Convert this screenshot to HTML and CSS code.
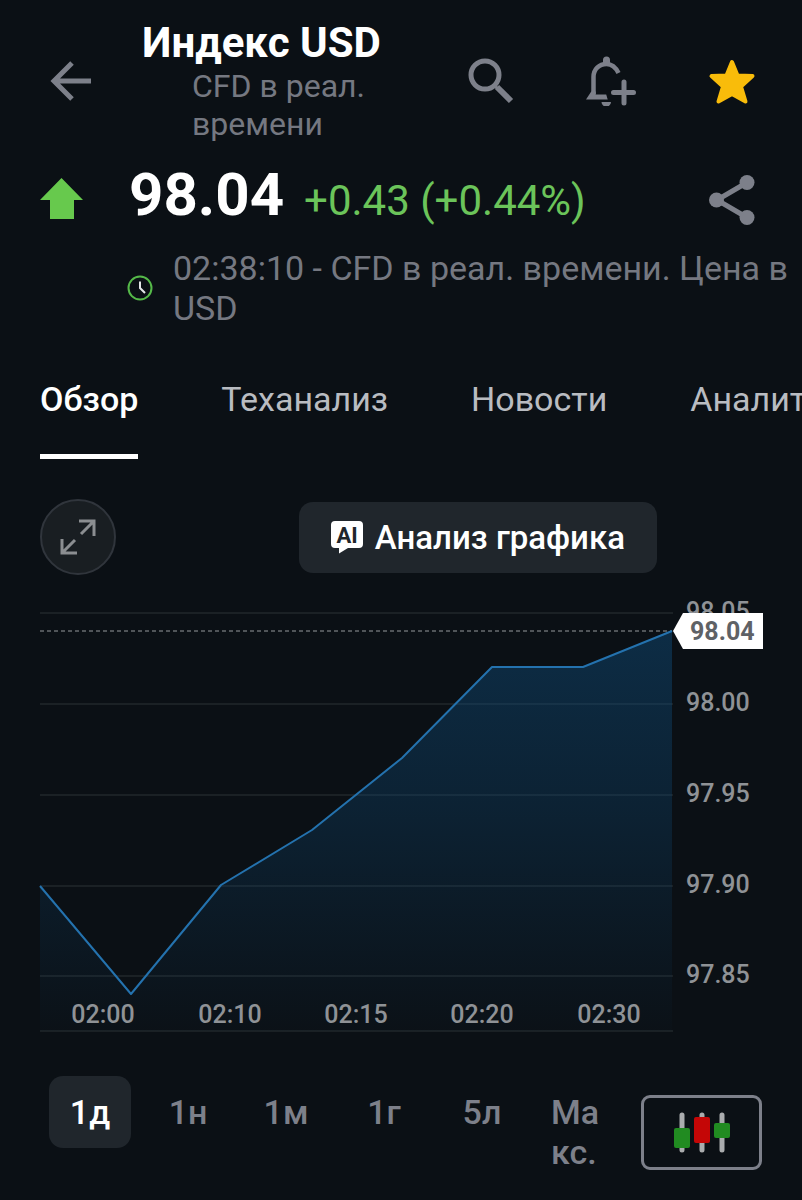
FILE: index.html
```html
<!DOCTYPE html>
<html lang="ru">
<head>
	<meta charset="UTF-8">
	<meta name="viewport" content="width=device-width, initial-scale=1">
	<title>Индекс USD</title>
	<link rel="stylesheet" href="styles.css">
</head>
<body>
<header class="topbar">
	<button class="icon-btn" type="button" aria-label="Назад">
		<svg width="42" height="42" viewBox="0 0 42 42" fill="none" stroke="currentColor" stroke-width="5"><path d="M41 21H5M22 3L4 21l18 18"/></svg>
	</button>
	<div class="heading">
		<h1>Индекс USD</h1>
		<p>CFD в реал. времени</p>
	</div>
	<div class="actions">
		<button class="icon-btn" type="button" aria-label="Поиск">
			<svg width="50" height="50" viewBox="0 0 50 50" fill="none" stroke="currentColor"><circle cx="20" cy="19" r="14" stroke-width="5"/><path d="M29 29l3 3" stroke-width="3"/><path d="M32 31l14 14" stroke-width="6"/></svg>
		</button>
		<button class="icon-btn" type="button" aria-label="Добавить уведомление">
			<svg width="50" height="50" viewBox="0 0 50 50" fill="none" stroke="currentColor"><path d="M32.500 17C29.500 11 25.500 8 20.500 8 13 8 7.500 13.500 7.500 21v17" stroke-width="4.500"/><path d="M0 43.500l5.250-8H9.700V38.500h10.500l1.500 5z" fill="currentColor" stroke="none"/><path d="M17 8V4a3.500 3.500 0 0 1 7 0v4zM15.500 46h9.500a4.700 4.700 0 0 1-9.500 0z" fill="currentColor" stroke="none"/><path d="M38 26v21M27.500 36.500h20" stroke-width="5" stroke-linecap="round"/></svg>
		</button>
		<button class="icon-btn star" type="button" aria-label="В избранном">
			<svg width="50" height="50" viewBox="0 0 50 50" fill="currentColor" stroke="currentColor" stroke-width="4" stroke-linejoin="round"><path d="M25 6l5.500 13.500L45.500 20 34 30.500l4.500 15L25 38l-13.500 7.500 4.500-15L4.500 20l15-.5z"/></svg>
		</button>
	</div>
</header>

<section class="quote">
	<svg class="up" width="43" height="41" viewBox="0 0 43 41" fill="currentColor"><path d="M21.500 0L43 22h-9v19H10V22H0z"/></svg>
	<div class="price">
		<strong>98.04</strong>
		<span class="change">+0.43 (+0.44%)</span>
	</div>
	<button class="icon-btn" type="button" aria-label="Поделиться">
		<svg width="50" height="50" viewBox="0 0 50 50" fill="currentColor"><path d="M40 7.500L10 25l30 17.500" fill="none" stroke="currentColor" stroke-width="5"/><circle cx="9.500" cy="25" r="7.500"/><circle cx="40" cy="7.500" r="7.500"/><circle cx="40" cy="42.500" r="7.500"/></svg>
	</button>
</section>
<div class="status">
	<svg width="26" height="26" viewBox="0 0 26 26" fill="none"><circle cx="13" cy="13" r="11.500" stroke="#55b949" stroke-width="2"/><path d="M13 6.500V13l5 5" stroke="#e4e6e8" stroke-width="2"/></svg>
	<p>02:38:10 - CFD в реал. времени. Цена в USD</p>
</div>

<nav class="tabs">
	<a href="#" class="active">Обзор</a>
	<a href="#">Теханализ</a>
	<a href="#">Новости</a>
	<a href="#">Аналитика</a>
</nav>

<main>
	<div class="tools">
		<button class="expand" type="button" aria-label="Развернуть график">
			<svg width="36" height="36" viewBox="0 0 36 36" fill="none" stroke="currentColor" stroke-width="3"><path d="M19 2h15v15M33 3L21 15M2 20v14h15M3 33l12-12"/></svg>
		</button>
		<button class="analysis" type="button">
			<svg width="34" height="34" viewBox="0 0 34 34"><path d="M5 1h24a4 4 0 0 1 4 4v19a4 4 0 0 1-4 4H18l-9 5.500V28H5a4 4 0 0 1-4-4V5a4 4 0 0 1 4-4z" fill="#fff"/><text class="ai" x="17" y="23">AI</text></svg>
			<span>Анализ графика</span>
		</button>
	</div>

	<svg class="chart" viewBox="0 0 722 440" role="img" aria-label="График индекса USD">
		<defs>
			<linearGradient id="fill" x1="0" y1="0" x2="0" y2="1">
				<stop offset="0" stop-color="#0f5488" stop-opacity=".42"/>
				<stop offset=".45" stop-color="#0f4f80" stop-opacity=".28"/>
				<stop offset="1" stop-color="#0f4f80" stop-opacity=".02"/>
			</linearGradient>
		</defs>
		<path class="grid" d="M0 13h633M0 104h633M0 195h633M0 286h633M0 376h633M0 431h633"/>
		<path d="M0 286L91 394 181 285 272 230 362 158 452 67H543L632 31V431H0z" fill="url(#fill)"/>
		<path class="last" d="M0 31h632"/>
		<path class="line" d="M0 286L91 394 181 285 272 230 362 158 452 67H543L632 31"/>
		<g class="axis">
			<text x="646" y="20">98.05</text>
			<text x="646" y="111">98.00</text>
			<text x="646" y="202">97.95</text>
			<text x="646" y="293">97.90</text>
			<text x="646" y="383">97.85</text>
		</g>
		<g class="axis time">
			<text x="63" y="423">02:00</text>
			<text x="190" y="423">02:10</text>
			<text x="316" y="423">02:15</text>
			<text x="442" y="423">02:20</text>
			<text x="569" y="423">02:30</text>
		</g>
		<path d="M633 31l10-18h80v36h-80z" fill="#fff"/>
		<text class="tag" x="650" y="40">98.04</text>
	</svg>

	<div class="footer">
		<div class="periods">
			<button type="button" class="active">1д</button>
			<button type="button">1н</button>
			<button type="button">1м</button>
			<button type="button">1г</button>
			<button type="button">5л</button>
			<button type="button" class="max">Макс.</button>
		</div>
		<button class="candles" type="button" aria-label="Свечной график">
			<svg width="56" height="41" viewBox="0 0 56 41"><path d="M8 3v35M28 3v35M48 3v35" stroke="#aaacae" stroke-width="5" stroke-linecap="round"/><rect x="0" y="16" width="16" height="20" rx="2" fill="#218b21"/><rect x="20" y="5" width="16" height="26" rx="2" fill="#c40606"/><rect x="40" y="11" width="16" height="15" rx="2" fill="#218b21"/></svg>
		</button>
	</div>
</main>
</body>
</html>
```
FILE: styles.css
```css
*{box-sizing:border-box}
body{margin:0; background:#0b1015; color:#fff; font-family:Roboto,"Noto Sans",sans-serif; overflow-x:hidden;}
h1,p{margin:0}
button{border:0; padding:0; background:none; color:inherit; font:inherit; cursor:pointer;}
svg{display:block; flex:none;}

.icon-btn{color:#7d808a}
.icon-btn.star{color:#f9bc0a}

/* top bar */
.topbar{display:flex; align-items:center; height:162px; padding:0 45px 0 50px;}
.heading{flex:1; padding-left:50px;}
.heading h1{font-size:42px; line-height:48px; font-weight:700; white-space:nowrap;}
.heading p{max-width:240px; padding-left:50px; font-size:32px; line-height:38px; color:#757881;}
.actions{display:flex; gap:71px;}

/* price */
.quote{display:flex; align-items:center; height:76px; padding:0 45px 0 40px;}
.up{margin-bottom:4px; color:#67c94d;}
.price{display:flex; flex:1; align-items:baseline; gap:20px; padding:0 0 10px 46px; white-space:nowrap;}
.price strong{font-size:60px; line-height:72px; font-weight:700;}
.change{font-size:42px; color:#6bc45a;}
.status{display:flex; align-items:center; gap:20px; padding:10px 0 0 127px; color:#757881;}
.status p{font-size:34px; line-height:40px;}

/* tabs */
.tabs{display:flex; gap:83px; padding:48px 0 0 40px; overflow:hidden;}
.tabs a{padding-bottom:32px; border-bottom:5px solid transparent; color:#b9bcc1; font-size:34px; line-height:46px; text-decoration:none; white-space:nowrap;}
.tabs a.active{color:#fff; border-color:#fff; font-weight:500;}

main{padding:40px 40px 0}
.tools{display:flex; align-items:center; justify-content:space-between; padding-right:105px;}
.expand{display:grid; place-items:center; width:76px; height:76px; border:2px solid #30353c; border-radius:50%; background:#191e22; color:#8b8e91;}
.analysis{display:flex; align-items:center; gap:11px; height:71px; padding:0 32px 0 31px; border-radius:14px; background:#20262c; font-size:33px; font-weight:500;}
.ai{fill:#20262c; font-size:22px; font-weight:700; text-anchor:middle;}

/* chart */
.chart{width:100%; margin-top:25px; overflow:visible;}
.grid{stroke:#2d3237; stroke-width:1; fill:none;}
.last{stroke:#96999d; stroke-width:1; stroke-dasharray:4 3;}
.line{fill:none; stroke:#2472ae; stroke-width:2; stroke-linejoin:round;}
.axis{fill:#8f9296; font-size:25px; font-weight:500;}
.time{text-anchor:middle}
.tag{fill:#5f6266; font-size:25px; font-weight:700;}

/* periods */
.footer{display:flex; align-items:center; gap:20px; padding:36px 0 11px 9px;}
.periods{display:grid; flex:1; grid-template-columns:repeat(6,1fr); gap:16px; align-items:start;}
.periods button{padding:16px 12px; border-radius:14px; color:#7d808a; font-size:34px; line-height:40px; font-weight:500; overflow-wrap:anywhere;}
.periods .active{background:#20262c; color:#fff;}
.periods .max{text-align:left}
.candles{display:grid; place-items:center; width:121px; height:75px; border:3px solid #7d808a; border-radius:9px;}
```
